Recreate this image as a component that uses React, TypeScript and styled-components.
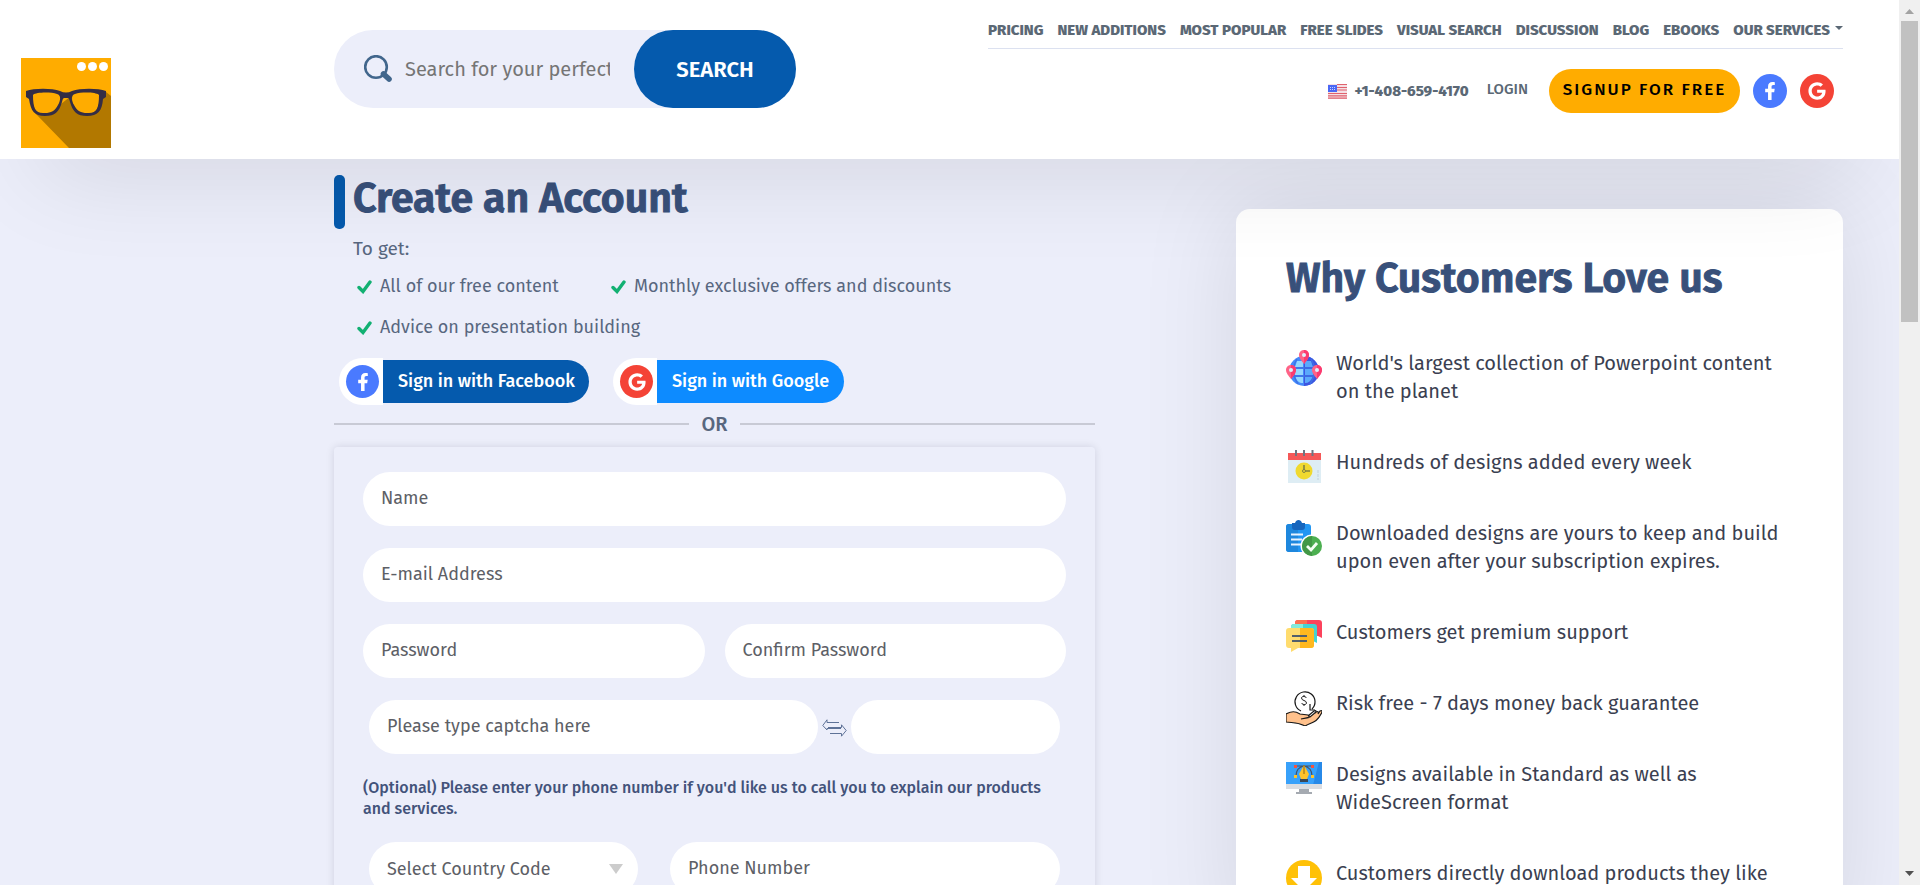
import React from "react";
import styled, { createGlobalStyle } from "styled-components";
import { FaFacebookF, FaGoogle } from "react-icons/fa";

const GlobalStyle = createGlobalStyle`
  *, *::before, *::after { box-sizing: border-box; }
  body {
    margin: 0;
    background: #eceefa;
    color: #3b3f51;
    font-family: "Fira Sans", Roboto, "Noto Sans", sans-serif;
    font-size: 18px;
  }
  button, input, select { font-family: inherit; }
  h1, h2, p, ul { margin: 0; padding: 0; }
  ul { list-style: none; }
  a { color: inherit; text-decoration: none; }
`;

const Window = styled.div`
  display: flex;
  height: 100vh;
  overflow: hidden;
`;

const Page = styled.div`
  flex: 1;
  min-width: 0;
  overflow: hidden auto;
  scrollbar-width: none;
`;

const ScrollTrack = styled.div`
  display: flex;
  flex-direction: column;
  align-items: center;
  flex: 0 0 21px;
  background: #f0f0f0;
`;

const ScrollThumb = styled.div`
  width: 17px;
  height: 34%;
  margin-bottom: auto;
  background: #c1c1c1;
`;

const ScrollArrow = styled.svg`
  flex: none;
  width: 21px;
  height: 21px;
`;

const Header = styled.header`
  position: relative;
  z-index: 2;
  display: flex;
  align-items: flex-start;
  min-height: 159px;
  padding: 0 56px 0 21px;
  background: #fff;
  box-shadow: 0 50px 100px -40px rgba(0, 0, 0, 0.12);
`;

const LogoLink = styled.a`
  flex: none;
  margin: 58px 223px 0 0;
  svg { display: block; width: 90px; height: 90px; }
`;

const SearchForm = styled.form`
  display: flex;
  align-items: center;
  flex: none;
  width: 462px;
  height: 78px;
  margin-top: 30px;
  padding-left: 30px;
  border-radius: 39px;
  background: #eceefa;
  svg { flex: none; width: 28px; height: 28px; }
`;

const SearchInput = styled.input`
  flex: 1;
  min-width: 0;
  margin: 0 24px 0 13px;
  padding: 0;
  border: 0;
  background: transparent;
  font-size: 20px;
  outline: 0;
  &::placeholder { color: #757575; opacity: 1; }
`;

const SearchButton = styled.button`
  flex: none;
  width: 162px;
  height: 78px;
  border: 0;
  border-radius: 39px;
  background: #055aad;
  color: #fff;
  font-size: 22px;
  font-weight: 600;
`;

const HeaderRight = styled.div`
  flex: 0 1 855px;
  margin-left: auto;
`;

const Nav = styled.nav`
  display: flex;
  justify-content: space-between;
  align-items: center;
  height: 49px;
  padding-top: 12px;
  border-bottom: 1px solid #dce1f0;
  color: #5b6875;
  font-size: 15px;
  font-weight: 800;
  white-space: nowrap;
`;

const NavLink = styled.a`
  display: flex;
  align-items: center;
  gap: 5px;
`;

const Caret = styled.span`
  margin-bottom: 4px;
  border: 4px solid transparent;
  border-top-color: currentColor;
  border-bottom: 0;
`;

const Account = styled.div`
  display: flex;
  justify-content: flex-end;
  align-items: center;
  height: 44px;
  margin-top: 20px;
  padding-right: 9px;
  color: #5b6875;
  font-size: 15px;
  font-weight: 800;
`;

const Phone = styled.a`
  display: flex;
  align-items: center;
  gap: 7px;
`;

const Login = styled.a`
  margin: 0 21px 4px 18px;
  font-size: 15px;
  font-weight: 500;
`;

const Signup = styled.a`
  width: 191px;
  height: 44px;
  border-radius: 22px;
  background: #ffac00;
  color: #000;
  font-size: 17px;
  font-weight: 500;
  letter-spacing: 2px;
  line-height: 42px;
  text-align: center;
`;

const Round = styled.span<{ $color: string; $size: number }>`
  display: inline-flex;
  align-items: center;
  justify-content: center;
  flex: none;
  width: ${(p) => p.$size}px;
  height: ${(p) => p.$size}px;
  border-radius: 50%;
  background: ${(p) => p.$color};
  color: #fff;
  font-size: 18px;
`;

const SocialLink = styled.a`
  display: flex;
  margin-left: 13px;
`;

const Main = styled.main`
  display: grid;
  grid-template-columns: minmax(0, 761fr) minmax(0, 607fr);
  column-gap: 141px;
  align-items: start;
  padding: 16px 56px 60px 334px;
`;

const Title = styled.h1`
  display: flex;
  align-items: center;
  gap: 8px;
  height: 54px;
  color: #38507a;
  font-size: 41px;
  font-weight: 600;
  line-height: 48px;
  -webkit-text-stroke: 1px currentColor;
  &::before {
    content: "";
    align-self: stretch;
    width: 11px;
    border-radius: 5px;
    background: #055aad;
  }
  span { margin-top: -6px; }
`;

const Intro = styled.p`
  padding: 8px 0 0 19px;
  color: #58677f;
  font-size: 19px;
  line-height: 24px;
`;

const Benefits = styled.ul`
  display: flex;
  flex-wrap: wrap;
  padding: 5px 0 0 23px;
  color: #58677f;
  line-height: 41px;
  li { display: flex; align-items: center; gap: 8px; }
  li:first-child { flex-basis: 254px; }
  svg { width: 15px; height: 14px; }
`;

const SignIns = styled.div`
  display: flex;
  align-items: center;
  gap: 24px;
  padding: 10px 0 0 5px;
`;

const SignIn = styled.button<{ $width: number }>`
  display: flex;
  align-items: center;
  width: ${(p) => p.$width}px;
  padding: 0;
  border: 0;
  background: none;
  color: #fff;
  font-size: 18px;
  font-weight: 500;
`;

const SignInIcon = styled.span`
  display: flex;
  align-items: center;
  flex: none;
  width: 44px;
  height: 47px;
  padding-left: 7px;
  border-radius: 24px 0 0 24px;
  background: #fff;
`;

const SignInText = styled.span<{ $color: string }>`
  flex: 1;
  height: 43px;
  padding-left: 15px;
  border-radius: 0 22px 22px 0;
  background: ${(p) => p.$color};
  line-height: 42px;
  text-align: left;
  white-space: nowrap;
`;

const Divider = styled.div`
  display: flex;
  align-items: center;
  gap: 12px;
  height: 38px;
  margin-bottom: 4px;
  color: #58677f;
  font-size: 20px;
  font-weight: 500;
  &::before, &::after {
    content: "";
    flex: 1;
    height: 2px;
    background: #c8cad5;
  }
`;

const Form = styled.form`
  display: grid;
  grid-template-columns: 1fr 1fr;
  gap: 22px 20px;
  padding: 25px 29px;
  border-radius: 4px;
  box-shadow: 0 0 8px rgba(0, 0, 40, 0.12);
`;

const Field = styled.input<{ $wide?: boolean }>`
  width: 100%;
  min-width: 0;
  height: 54px;
  padding: 0 18px 2px;
  border: 0;
  border-radius: 27px;
  background: #fff;
  color: #5d6066;
  font-size: 18px;
  outline: 0;
  ${(p) => p.$wide && "grid-column: 1 / -1;"}
  &::placeholder { color: #5d6066; opacity: 1; }
`;

const CaptchaRow = styled.div`
  grid-column: 1 / -1;
  display: grid;
  grid-template-columns: 449fr 25px 209fr;
  gap: 4px;
  align-items: center;
  padding: 0 6px;
`;

const SwapButton = styled.button`
  display: flex;
  padding: 2px 0 0;
  border: 0;
  background: none;
  svg { width: 25px; height: 18px; }
`;

const PhoneRow = styled.div`
  grid-column: 1 / -1;
  display: grid;
  grid-template-columns: 269fr 390fr;
  gap: 32px;
  padding: 0 6px;
`;

const SelectBox = styled.div`
  display: grid;
  align-items: center;
  & > * { grid-area: 1 / 1; }
  svg { justify-self: end; width: 14px; height: 10px; margin-right: 15px; pointer-events: none; }
`;

const CountrySelect = styled.select`
  width: 100%;
  height: 54px;
  padding: 0 18px;
  border: 0;
  border-radius: 27px;
  background: #fff;
  color: #5d6066;
  font-size: 18px;
  appearance: none;
`;

const Note = styled.p`
  grid-column: 1 / -1;
  padding: 1px 0;
  color: #43537a;
  font-size: 16px;
  font-weight: 500;
  line-height: 21px;
`;

const Card = styled.aside`
  margin-top: 34px;
  padding: 45px 50px 60px 50px;
  border-radius: 14px;
  background: #fff;
  box-shadow: 0 0 100px rgba(0, 0, 0, 0.1);
`;

const CardTitle = styled.h2`
  color: #38507a;
  font-size: 41px;
  font-weight: 600;
  line-height: 50px;
  -webkit-text-stroke: 1px currentColor;
`;

const Reasons = styled.ul`
  display: grid;
  gap: 43px;
  padding-top: 45px;
`;

const Reason = styled.li`
  display: grid;
  grid-template-columns: 36px 1fr;
  gap: 14px;
  font-size: 20px;
  line-height: 28px;
  svg { width: 36px; height: 36px; margin: 1px 0 -9px; }
`;

const Logo = () => (
  <svg viewBox="0 0 90 90" aria-hidden="true">
    <rect width="90" height="90" fill="#ffac00" />
    <path d="M85 34l5 4v52H48L15 56l25-10 10-8z" fill="#b27800" />
    <g fill="#fff">
      <circle cx="60.5" cy="8.5" r="4.5" /><circle cx="71.5" cy="8.5" r="4.5" /><circle cx="82.5" cy="8.5" r="4.5" />
    </g>
    <path d="M11 37c3-3 22-3 26-1 3 2 2 8 0 12-3 7-8 8-14 8-8 0-11-5-12-19zM79 37c-3-3-22-3-26-1-3 2-2 8 0 12 3 7 8 8 14 8 8 0 11-5 12-19z" fill="#ffac00" />
    <path fillRule="evenodd" fill="#342d45" d="M5 33c8-3 26-3 34 0 4 2 8 2 12 0 8-3 26-3 34 0v6l-3 2c-1 12-5 17-16 17-10 0-14-4-17-14-1-5-2-4-4-4s-3-1-4 4c-3 10-7 14-17 14-11 0-14-5-16-17l-3-2zM12 37c0 14 3 19 12 18 6 0 10-2 13-8 3-5 3-10-1-11-6-2-21-2-24 1zM78 37c-3-3-18-3-24-1-4 1-4 6-1 11 3 6 7 8 13 8 9 1 12-4 12-18z" />
  </svg>
);

const Magnifier = () => (
  <svg viewBox="0 0 28 28" aria-hidden="true">
    <circle cx="12" cy="12" r="10.8" fill="none" stroke="#41668c" strokeWidth="2.6" />
    <path d="M19.5 19l5.5 5" stroke="#41668c" strokeWidth="5.6" strokeLinecap="round" />
  </svg>
);

const Flag = () => (
  <svg width="19" height="15" viewBox="0 0 19 15" aria-hidden="true">
    <rect width="19" height="15" fill="#f4dfe4" />
    <path d="M9 .5h10M9 3.5h10M9 6h10M0 9.5h19M0 11.8h19M0 14.2h19" stroke="#e0626d" strokeWidth="1.2" />
    <rect y="1" width="9" height="7" fill="#4a68f5" />
    <path d="M2 3.5h6M2 5.5h6" stroke="#c7d0ff" strokeDasharray="1 1" />
  </svg>
);

const Check = () => (
  <svg viewBox="0 0 15 14" aria-hidden="true">
    <path d="M2 7.5l4 4L13 2" fill="none" stroke="#12b072" strokeWidth="3.4" strokeLinecap="round" />
  </svg>
);

const Swap = () => (
  <svg viewBox="0 0 25 18" fill="none" stroke="#5e7297" aria-hidden="true">
    <path d="M17 3.5H5V.8L.8 6.500 5 11V9.500h14" />
    <path d="M8 14.5h11.500v2.700l4.700-5.700-4.700-5.700v2.700H6" />
  </svg>
);

const GlobeIcon = () => (
  <svg viewBox="0 0 36 36" aria-hidden="true">
    <circle cx="18" cy="21" r="15" fill="#4489fb" />
    <path d="M18 6a15 15 0 010 30z" fill="#3e55df" />
    <path d="M11 11h6v6H9zM8.5 19H17v6H9zM9.5 27H17v6c-4 0-6-2-7.5-6z" fill="#94d7ff" />
    <path d="M19 11h6l2 6h-8zM19 19h8.500l-.5 6h-8zM19 27h7.500c-1.500 4-4 6-7.500 6z" fill="#5aa9fb" />
    <path d="M11 9c-5 8-5 16 1 25M25 9c5 8 5 16-1 25M4 18h28M4 26h28" stroke="#3c72e6" strokeWidth="1.3" fill="none" />
    {[[18, 0], [5, 15], [31, 15]].map(([x, y]) => (
      <g key={x} transform={`translate(${x} ${y})`}>
        <path d="M0 0c3 0 5 2.300 5 5 0 3.500-5 9-5 9s-5-5.500-5-9c0-2.700 2-5 5-5z" fill="#ff6387" />
        <path d="M0 0c3 0 5 2.300 5 5 0 3.500-5 9-5 9z" fill="#fb3b70" />
        <circle cy="5" r="2" fill="#e0f0fc" />
      </g>
    ))}
  </svg>
);

const CalendarIcon = () => (
  <svg viewBox="0 0 36 36" aria-hidden="true">
    <path d="M2 4h33v30H2z" fill="#deedf4" />
    <path d="M2 4h33v7H2z" fill="#f55858" />
    <path d="M10 1v6M18 1v6M26.500 1v6" stroke="#6d7681" strokeWidth="2" />
    <circle cx="18" cy="22" r="8.5" fill="#f0d92f" />
    <path d="M18 16v6h6" stroke="#808143" strokeWidth="1.6" fill="none" />
    <circle cx="18" cy="22" r="1.5" fill="#f0d92f" stroke="#808143" />
    <path d="M32 21v10" stroke="#c0d1db" strokeDasharray="3 1" />
  </svg>
);

const ClipboardIcon = () => (
  <svg viewBox="0 0 36 36" aria-hidden="true">
    <rect y="4" width="25" height="28" rx="3" fill="#2196f3" />
    <path d="M0 7c0-2 1-3 3-3h9v28H3c-2 0-3-1-3-3z" fill="#1e87dd" />
    <path d="M6 3h3c1-4 6-4 7 0h3v4c0 2-1 3-3 3H9c-2 0-3-1-3-3z" fill="#1565bd" />
    <path d="M5 14.500h12M5 19.500h11M5 24.500h10" stroke="#e8f3ff" strokeWidth="2" />
    <circle cx="26" cy="26" r="11.5" fill="#fff" />
    <circle cx="26" cy="26" r="10" fill="#4caf50" />
    <path d="M26 16a10 10 0 000 20z" fill="#429846" />
    <path d="M21 26l4 4 6-7" fill="none" stroke="#f4fff4" strokeWidth="2.8" />
  </svg>
);

const ChatIcon = () => (
  <svg viewBox="0 0 36 36" aria-hidden="true">
    <path d="M12 1h21c2 0 3 1 3 3v15l-4-2H9V4c0-2 1-3 3-3z" fill="#fc425c" />
    <path d="M12 1h9v8H9V4c0-2 1-3 3-3z" fill="#fc7150" />
    <path d="M8 5h20c2 0 3 1 3 3v16l-4-2H5V8c0-2 1-3 3-3z" fill="#45d2d2" />
    <path d="M8 5h9v8H5V8c0-2 1-3 3-3z" fill="#84ebdb" />
    <path d="M3 9h22c2 0 3 1 3 3v14c0 2-1 3-3 3H12l-7 4v-4H3c-2 0-3-1-3-3V12c0-2 1-3 3-3z" fill="#ffdc6e" />
    <path d="M14 9h11c2 0 3 1 3 3v14c0 2-1 3-3 3H14z" fill="#ffb81f" />
    <path d="M6 17h15M6 22h15" stroke="#52606c" strokeWidth="2" />
  </svg>
);

const HandIcon = () => (
  <svg viewBox="0 0 36 36" fill="none" stroke="#171717" strokeWidth="1.2" aria-hidden="true">
    <path d="M15 21a10 10 0 1111-2M24 14v6h5" />
    <path d="M20.500 8c-1-2-5-2-5 0 0 3 5 2 5 5 0 2-4 2-5 0M18 5v2M18 14v2" strokeWidth="1" />
    <path d="M0 24c6-3 9-3 14 0l8 1c2 1 1 3-1 3l-6 1 9-2 6-5c2-1 3 0 2 2l2-3c2-1 3 0 1 3-4 8-8 8-16 12-7-4-12-3-19-4z" fill="#ffc18c" />
    <path d="M22 26l6-5c2-1 3 0 1 2" />
  </svg>
);

const MonitorIcon = () => (
  <svg viewBox="0 0 36 36" aria-hidden="true">
    <path d="M0 1h36v23H0z" fill="#38a1fa" />
    <path d="M33 1h3v23h-9z" fill="#2789e8" />
    <path d="M0 23h36v5H0z" fill="#dbdde1" />
    <path d="M13 28h10v3h3v2H10v-2h3z" fill="#a5aab1" />
    <path d="M10 15c0-6 3-9 8-10 5 1 8 4 8 10M9 5h18" fill="none" stroke="#43546a" strokeWidth="1.2" />
    <path d="M18 4l5 9-2 5h-6l-2-5z" fill="#ffc32b" />
    <path d="M18 4v9" stroke="#8d6516" />
    <path d="M14 18h8v3h-8z" fill="#3a4756" />
    <path d="M8 4h3v3H8zM25 4h3v3h-3z" fill="#f35440" />
    <path d="M8 14h3v3H8zM25 14h3v3h-3z" fill="#ffc32b" />
  </svg>
);

const DownloadIcon = () => (
  <svg viewBox="0 0 36 36" aria-hidden="true">
    <circle cx="18" cy="18" r="18" fill="#ffc107" />
    <path d="M12 6h12v12h7L18 31 5 18h7z" fill="#fff" />
  </svg>
);

const navItems = ["Pricing", "New Additions", "Most Popular", "Free Slides", "Visual Search", "Discussion", "Blog", "Ebooks"];

const reasons = [
  { icon: <GlobeIcon />, text: "World's largest collection of Powerpoint content on the planet" },
  { icon: <CalendarIcon />, text: "Hundreds of designs added every week" },
  { icon: <ClipboardIcon />, text: "Downloaded designs are yours to keep and build upon even after your subscription expires." },
  { icon: <ChatIcon />, text: "Customers get premium support" },
  { icon: <HandIcon />, text: "Risk free - 7 days money back guarantee" },
  { icon: <MonitorIcon />, text: "Designs available in Standard as well as WideScreen format" },
  { icon: <DownloadIcon />, text: "Customers directly download products they like" },
];

export default function App() {
  return (
    <Window>
      <GlobalStyle />
      <Page>
        <Header>
          <LogoLink href="#" aria-label="Home"><Logo /></LogoLink>
          <SearchForm role="search">
            <Magnifier />
            <SearchInput type="text" aria-label="Search" placeholder="Search for your perfect slide" />
            <SearchButton type="button">SEARCH</SearchButton>
          </SearchForm>
          <HeaderRight>
            <Nav>
              {navItems.map((item) => (
                <NavLink key={item} href="#">{item.toUpperCase()}</NavLink>
              ))}
              <NavLink href="#">OUR SERVICES<Caret /></NavLink>
            </Nav>
            <Account>
              <Phone href="tel:+14086594170"><Flag />+1-408-659-4170</Phone>
              <Login href="#">LOGIN</Login>
              <Signup href="#">SIGNUP FOR FREE</Signup>
              <SocialLink href="#" aria-label="Facebook"><Round $color="#4a7aff" $size={34}><FaFacebookF /></Round></SocialLink>
              <SocialLink href="#" aria-label="Google"><Round $color="#f44336" $size={34}><FaGoogle /></Round></SocialLink>
            </Account>
          </HeaderRight>
        </Header>
        <Main>
          <section>
            <Title><span>Create an Account</span></Title>
            <Intro>To get:</Intro>
            <Benefits>
              <li><Check />All of our free content</li>
              <li><Check />Monthly exclusive offers and discounts</li>
              <li><Check />Advice on presentation building</li>
            </Benefits>
            <SignIns>
              <SignIn type="button" $width={250}>
                <SignInIcon><Round $color="#4a7aff" $size={33}><FaFacebookF /></Round></SignInIcon>
                <SignInText $color="#055aad">Sign in with Facebook</SignInText>
              </SignIn>
              <SignIn type="button" $width={231}>
                <SignInIcon><Round $color="#f44336" $size={33}><FaGoogle /></Round></SignInIcon>
                <SignInText $color="#0d8bff">Sign in with Google</SignInText>
              </SignIn>
            </SignIns>
            <Divider>OR</Divider>
            <Form>
              <Field $wide type="text" aria-label="Name" placeholder="Name" />
              <Field $wide type="email" aria-label="E-mail Address" placeholder="E-mail Address" />
              <Field type="password" aria-label="Password" placeholder="Password" />
              <Field type="password" aria-label="Confirm Password" placeholder="Confirm Password" />
              <CaptchaRow>
                <Field type="text" aria-label="Captcha" placeholder="Please type captcha here" />
                <SwapButton type="button" aria-label="New captcha"><Swap /></SwapButton>
                <Field type="text" aria-label="Captcha code" readOnly />
              </CaptchaRow>
              <Note>
                (Optional) Please enter your phone number if you'd like us to call you to explain our products and services.
              </Note>
              <PhoneRow>
                <SelectBox>
                  <CountrySelect aria-label="Country code" defaultValue="">
                    <option value="">Select Country Code</option>
                  </CountrySelect>
                  <svg viewBox="0 0 14 10" aria-hidden="true"><path d="M0 0h14L7 10z" fill="#ccc" /></svg>
                </SelectBox>
                <Field type="tel" aria-label="Phone Number" placeholder="Phone Number" />
              </PhoneRow>
            </Form>
          </section>
          <Card>
            <CardTitle>Why Customers Love us</CardTitle>
            <Reasons>
              {reasons.map(({ icon, text }) => (
                <Reason key={text}>{icon}<span>{text}</span></Reason>
              ))}
            </Reasons>
          </Card>
        </Main>
      </Page>
      <ScrollTrack aria-hidden="true">
        <ScrollArrow viewBox="0 0 21 21"><path d="M6 14l4.500-5 4.500 5z" fill="#a3a3a3" /></ScrollArrow>
        <ScrollThumb />
        <ScrollArrow viewBox="0 0 21 21"><path d="M6 7h9l-4.500 5z" fill="#505050" /></ScrollArrow>
      </ScrollTrack>
    </Window>
  );
}
